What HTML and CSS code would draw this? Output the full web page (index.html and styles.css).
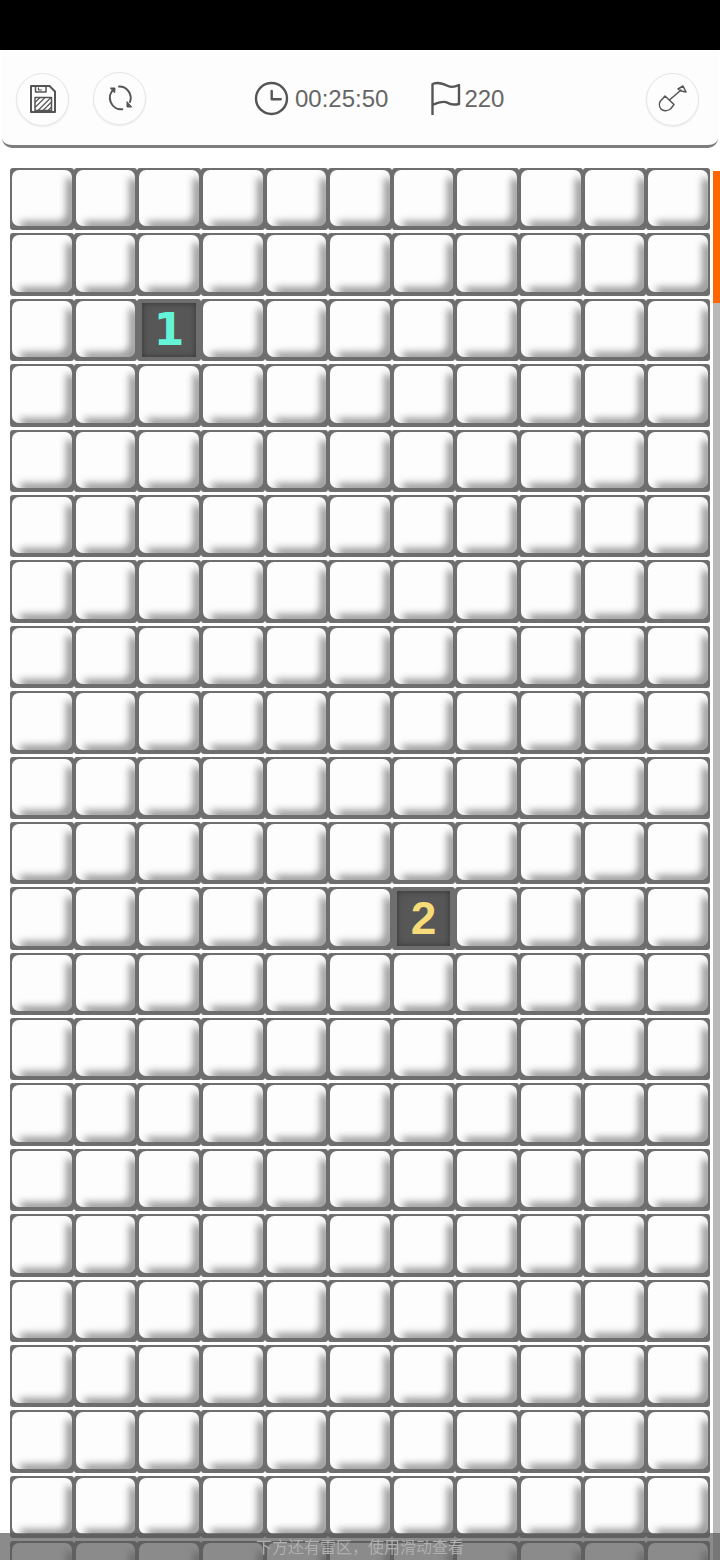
FILE: index.html
```html
<!DOCTYPE html>
<html lang="zh-CN">
<head>
  <meta charset="UTF-8" />
  <title>扫雷</title>
  <link rel="stylesheet" href="styles.css">
</head>
<body>
  <div class="status-bar"></div>

  <div class="toolbar">
    <button class="round-btn">
      <svg width="30" height="30" viewBox="0 0 30 30" fill="none" stroke="#555" stroke-width="2" stroke-linejoin="round">
        <path d="M3 2H21.500L27 7.500V28H3Z"/>
        <path d="M7.500 2V8H18V2" stroke-width="1.5"/>
        <path d="M10.500 3.500V6H14" stroke-width="1.200"/>
        <path d="M7 13.500H23.500V26.500H7Z" stroke-width="1.500"/>
        <path d="M7 18.500L12 13.500M7 23.500L17 13.500M10 26.500L23 13.500M15 26.500L23.500 18M20 26.500L23.500 23" stroke-width="1.100"/>
      </svg>
    </button>
    <button class="round-btn refresh-btn">
      <svg width="30" height="30" viewBox="0 0 30 30" fill="none" stroke="#555" stroke-width="2" stroke-linecap="round">
        <path d="M9 6A11.500 11.500 0 0 0 17.300 26.300"/>
        <path d="M14 3.500A11.500 11.500 0 0 1 25 19"/>
        <path d="M5.700 5L10 5L9.700 9.500Z" fill="#555" stroke-width="1"/>
        <path d="M26.300 24L22 24L22 19Z" fill="#555" stroke-width="1"/>
      </svg>
    </button>

    <div class="stats">
      <svg width="36" height="36" viewBox="0 0 36 36" fill="none" stroke="#555" stroke-width="2.400" stroke-linecap="round" stroke-linejoin="round">
        <circle cx="17.500" cy="17.500" r="15.500"/>
        <path d="M17.700 10V18.300H26.700"/>
      </svg>
      <span class="time">00:25:50</span>
      <svg class="flag" width="32" height="36" viewBox="0 0 32 36" fill="none" stroke="#555" stroke-width="2.400" stroke-linejoin="round">
        <path d="M3.500 34V3C10 0.500 15 3 19 5S26 6 30 4V23C25 24 22 24 19 22S10 21 3.500 24"/>
      </svg>
      <span class="count">220</span>
    </div>

    <button class="round-btn shovel-btn">
      <svg width="30" height="30" viewBox="0 0 30 30" fill="none" stroke="#555" stroke-width="1.500" stroke-linecap="round" stroke-linejoin="round">
        <path d="M7 12L16 20.500L12.500 25C9 27.500 5 27 3 25C1 22.500 1 19 2.500 17Z"/>
        <path d="M11.500 16L23 6"/>
        <path d="M20 5L25 2L28 8L23 7Z"/>
      </svg>
    </button>
  </div>

  <div class="board" id="board"></div>

  <div class="scroll-track"><div class="scroll-thumb"></div></div>
  <div class="toast">下方还有雷区，使用滑动查看</div>

  <script>
    const board = document.getElementById('board');
    const opened = { '2,2': 1, '11,6': 2 };

    for (let r = 0; r < 22; r++) {
      for (let c = 0; c < 11; c++) {
        const cell = document.createElement('div');
        const n = opened[r + ',' + c];
        cell.className = 'cell';
        const inner = document.createElement('div');
        inner.className = n ? 'open n' + n : 'closed';
        if (n) inner.textContent = n;
        cell.appendChild(inner);
        board.appendChild(cell);
      }
    }
  </script>
</body>
</html>
```

FILE: styles.css
```css
html, body {
  margin: 0;
  height: 1560px;
  overflow: hidden;
  background: #fff;
  font-family: "Liberation Sans", Arial, sans-serif;
  color: #666;
}
.status-bar {
  height: 50px;
  background: #000;
}
.toolbar {
  display: flex;
  align-items: center;
  height: 92px;
  margin: 0 2px;
  padding: 3px 19px 0 14px;
  background: #fdfdfd;
  border-bottom: 3px solid #7d7d7d;
  border-radius: 0 0 10px 10px;
}
.round-btn {
  width: 53px;
  height: 53px;
  padding: 0;
  display: flex;
  align-items: center;
  justify-content: center;
  background: #fdfdfd;
  border: 1px solid #e6e6e6;
  border-radius: 50%;
  box-shadow: 0 1px 2px rgba(0, 0, 0, .08);
}
.refresh-btn {
  margin-left: 24px;
  margin-top: -2px;
}
.stats {
  display: flex;
  align-items: center;
  margin-left: 108px;
  font-size: 24px;
}
.time {
  margin-left: 5px;
}
.flag {
  margin-left: 41px;
}
.count {
  margin-left: 3px;
}
.shovel-btn {
  margin-left: auto;
}
.board {
  display: grid;
  grid-template-columns: repeat(11, 1fr);
  grid-auto-rows: 62.4px;
  row-gap: 3px;
  width: 700px;
  margin: 20px 0 0 10px;
}
.cell {
  padding: 2px 2px 4px 2px;
  background: #6e6e6e;
  border-radius: 3px;
  box-sizing: border-box;
}
.closed {
  position: relative;
  height: 100%;
  overflow: hidden;
  background: #fdfdfd;
  border-radius: 7px;
}
/* bevel on the right and bottom edges only */
.closed::before {
  content: "";
  position: absolute;
  top: 8px;
  left: 8px;
  right: -4px;
  bottom: -5px;
  border-radius: 8px;
  box-shadow: inset -10px -10px 0 rgba(0, 0, 0, .38);
  filter: blur(3.500px);
}
.open {
  display: flex;
  align-items: center;
  justify-content: center;
  height: calc(100% - 2px);
  margin: 2px 3px 0 3px;
  background: #575757;
  box-shadow: inset 0 0 6px rgba(0, 0, 0, .4);
  font-weight: bold;
}
.n1 {
  font-family: "DejaVu Sans", sans-serif;
  font-size: 44px;
  color: #64f5d8;
}
.n2 {
  font-size: 46px;
  color: #f5dc78;
}
.scroll-track {
  position: fixed;
  top: 171px;
  right: 0;
  bottom: 0;
  width: 7px;
  background: #b9b9b9;
}
.scroll-thumb {
  height: 132px;
  background: #ff6600;
}
.toast {
  position: fixed;
  left: 0;
  right: 0;
  bottom: 0;
  height: 27px;
  line-height: 30px;
  text-align: center;
  font-family: "Liberation Sans", "Noto Sans CJK SC", sans-serif;
  font-size: 16px;
  color: #b0b0b0;
  background: rgba(90, 90, 90, .7);
}
```
